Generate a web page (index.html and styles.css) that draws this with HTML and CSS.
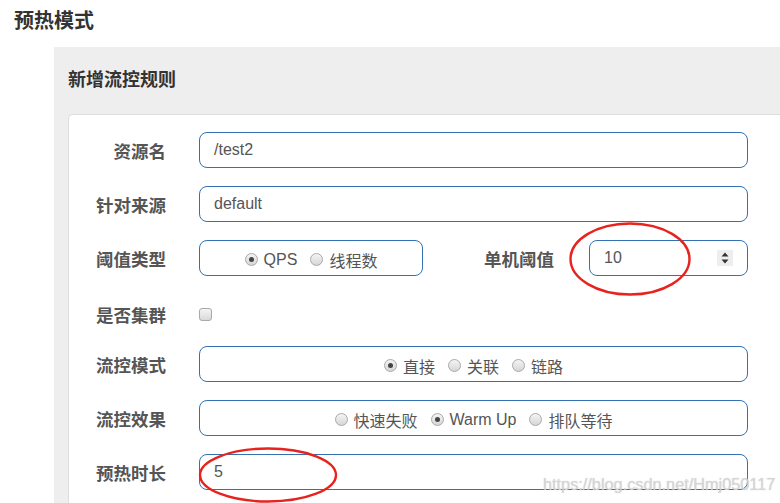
FILE: index.html
```html
<!DOCTYPE html>
<html lang="zh">
<head>
<meta charset="utf-8">
<title>预热模式</title>
<link rel="stylesheet" href="styles.css">
</head>
<body>
<h3 class="title">预热模式</h3>
<div class="panel">
  <div class="panel-heading">新增流控规则</div>
  <div class="panel-body">
    <div class="row">
      <div class="label">资源名</div>
      <div class="input wide">/test2</div>
    </div>
    <div class="row">
      <div class="label">针对来源</div>
      <div class="input wide">default</div>
    </div>
    <div class="row">
      <div class="label">阈值类型</div>
      <div class="input group narrow">
        <span class="radio checked"></span><span class="rtext">QPS</span>
        <span class="radio"></span><span class="rtext">线程数</span>
      </div>
      <div class="label label2">单机阈值</div>
      <div class="input num">
        <span>10</span>
        <span class="spin">
          <svg width="16" height="16" viewBox="0 0 16 16"><path d="M4.5 6.5 L8 2.5 L11.5 6.5 Z M4.5 9.5 L8 13.5 L11.5 9.5 Z" fill="#333"/></svg>
        </span>
      </div>
    </div>
    <div class="row row-check">
      <div class="label">是否集群</div>
      <span class="checkbox"></span>
    </div>
    <div class="row">
      <div class="label">流控模式</div>
      <div class="input group wide">
        <span class="radio checked"></span><span class="rtext">直接</span>
        <span class="radio"></span><span class="rtext">关联</span>
        <span class="radio"></span><span class="rtext">链路</span>
      </div>
    </div>
    <div class="row">
      <div class="label">流控效果</div>
      <div class="input group wide">
        <span class="radio"></span><span class="rtext">快速失败</span>
        <span class="radio checked"></span><span class="rtext">Warm Up</span>
        <span class="radio"></span><span class="rtext">排队等待</span>
      </div>
    </div>
    <div class="row">
      <div class="label">预热时长</div>
      <div class="input wide">5</div>
    </div>
  </div>
</div>
<svg class="mark mark1" width="124" height="76" viewBox="0 0 124 76"><ellipse cx="62" cy="38" rx="59.5" ry="35.5" fill="none" stroke="#e8221c" stroke-width="2.4"/></svg>
<svg class="mark mark2" width="142" height="58" viewBox="0 0 142 58"><ellipse cx="71" cy="29" rx="68" ry="26.5" fill="none" stroke="#e8221c" stroke-width="2.4"/></svg>
<div class="watermark">https://blog.csdn.net/Hmj050117</div>
</body>
</html>
```
FILE: styles.css
```css
html, body {
  margin: 0;
  padding: 0;
  background: #fff;
  overflow: hidden;
  width: 780px;
  height: 503px;
  position: relative;
  font-family: "Liberation Sans", Arial, "Noto Sans CJK SC", sans-serif;
}
.title {
  margin: 0;
  padding: 8px 0 0 14px;
  height: 24px;
  line-height: 24px;
  font-size: 20px;
  font-weight: bold;
  color: #333;
  font-family: "Noto Sans CJK SC", sans-serif;
}
.panel {
  margin: 15px 0 0 54px;
  background: #eee;
  height: 456px;
}
.panel-heading {
  height: 24px;
  line-height: 24px;
  padding: 19px 0 24px 14px;
  font-size: 18px;
  font-weight: bold;
  color: #333;
  font-family: "Noto Sans CJK SC", sans-serif;
}
.panel-body {
  margin-left: 14px;
  background: #fff;
  border: 1px solid #ddd;
  border-right: none;
  border-bottom: none;
  border-radius: 5px 0 0 0;
  padding-top: 17px;
  height: 371px;
}
.row {
  display: flex;
  align-items: center;
  height: 36px;
  margin-bottom: 18px;
}
.row-check {
  height: 40px;
  margin-bottom: 12px;
}
.label {
  width: 97px;
  margin-right: 33px;
  padding-top: 2px;
  text-align: right;
  font-family: "Noto Sans CJK SC", sans-serif;
  font-weight: bold;
  font-size: 17.5px;
  color: #555;
  line-height: 24px;
}
.label2 {
  width: 131px;
  margin-right: 35px;
}
.input {
  box-sizing: border-box;
  height: 36px;
  border: 1px solid #3471b3;
  border-radius: 8px;
  padding-left: 14px;
  display: flex;
  align-items: center;
  font-size: 16px;
  color: #555;
}
.wide { width: 549px; }
.narrow { width: 224px; }
.num {
  width: 159px;
  justify-content: space-between;
  padding-right: 14px;
}
.spin {
  width: 16px;
  height: 16px;
  background: #eee;
  display: flex;
}
.group {
  justify-content: center;
  padding-left: 0;
  padding-top: 3px;
}
.radio {
  box-sizing: border-box;
  width: 13px;
  height: 13px;
  border-radius: 50%;
  border: 1px solid #a9a9a9;
  background: linear-gradient(#f4f4f4, #d6d6d6);
  margin-right: 6px;
  position: relative;
}
.radio.checked::after {
  content: "";
  position: absolute;
  left: 3px;
  top: 3px;
  width: 5px;
  height: 5px;
  border-radius: 50%;
  background: #444;
}
.rtext {
  margin-right: 13px;
  font-family: "Liberation Sans", Arial, "Noto Sans CJK SC", sans-serif;
}
.rtext:last-child { margin-right: 0; }
.checkbox {
  box-sizing: border-box;
  width: 13px;
  height: 13px;
  border: 1px solid #a9a9a9;
  border-radius: 3px;
  background: linear-gradient(#f4f4f4, #d9d9d9);
}
.mark {
  position: absolute;
}
.mark1 { left: 568px; top: 221px; }
.mark2 { left: 197px; top: 446px; }
.watermark {
  position: absolute;
  left: 543px;
  top: 475px;
  font-size: 16.3px;
  color: rgba(215, 215, 215, 0.9);
  text-shadow: 0 0 1px rgba(150,150,150,0.5);
  white-space: nowrap;
}
```
